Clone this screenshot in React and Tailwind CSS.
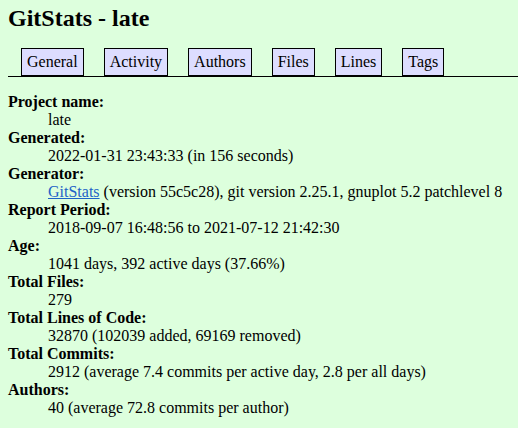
const tabs = ['General', 'Activity', 'Authors', 'Files', 'Lines', 'Tags']

const rows = [
  ['Project name', 'late'],
  ['Generated', '2022-01-31 23:43:33 (in 156 seconds)'],
  ['Generator', null],
  ['Report Period', '2018-09-07 16:48:56 to 2021-07-12 21:42:30'],
  ['Age', '1041 days, 392 active days (37.66%)'],
  ['Total Files', '279'],
  ['Total Lines of Code', '32870 (102039 added, 69169 removed)'],
  ['Total Commits', '2912 (average 7.4 commits per active day, 2.8 per all days)'],
  ['Authors', '40 (average 72.8 commits per author)'],
]

function App() {
  return (
    <div
      className="min-h-screen bg-[#ddffdd] text-black pt-[4px] pl-[8px] text-[16px] leading-[18px]"
      style={{ fontFamily: '"Liberation Serif", "Times New Roman", serif' }}
    >
      <h1 className="text-[24px] leading-[28px] font-bold">GitStats - late</h1>

      <div className="mt-[16px] flex gap-[20px] pl-[13px] border-b border-black">
        {tabs.map(t => (
          <a key={t} className="block border border-black bg-[#ddddff] px-[5px] py-[4px] whitespace-nowrap cursor-pointer">
            {t}
          </a>
        ))}
      </div>

      <dl className="mt-[16px]">
        {rows.map(([label, value]) => (
          <div key={label}>
            <dt className="font-bold">{label}:</dt>
            <dd className="ml-[40px]">
              {value !== null ? value : (
                <>
                  <a className="text-[#1e63c8] underline cursor-pointer">GitStats</a> (version 55c5c28), git version 2.25.1, gnuplot 5.2 patchlevel 8
                </>
              )}
            </dd>
          </div>
        ))}
      </dl>
    </div>
  )
}

export default App
